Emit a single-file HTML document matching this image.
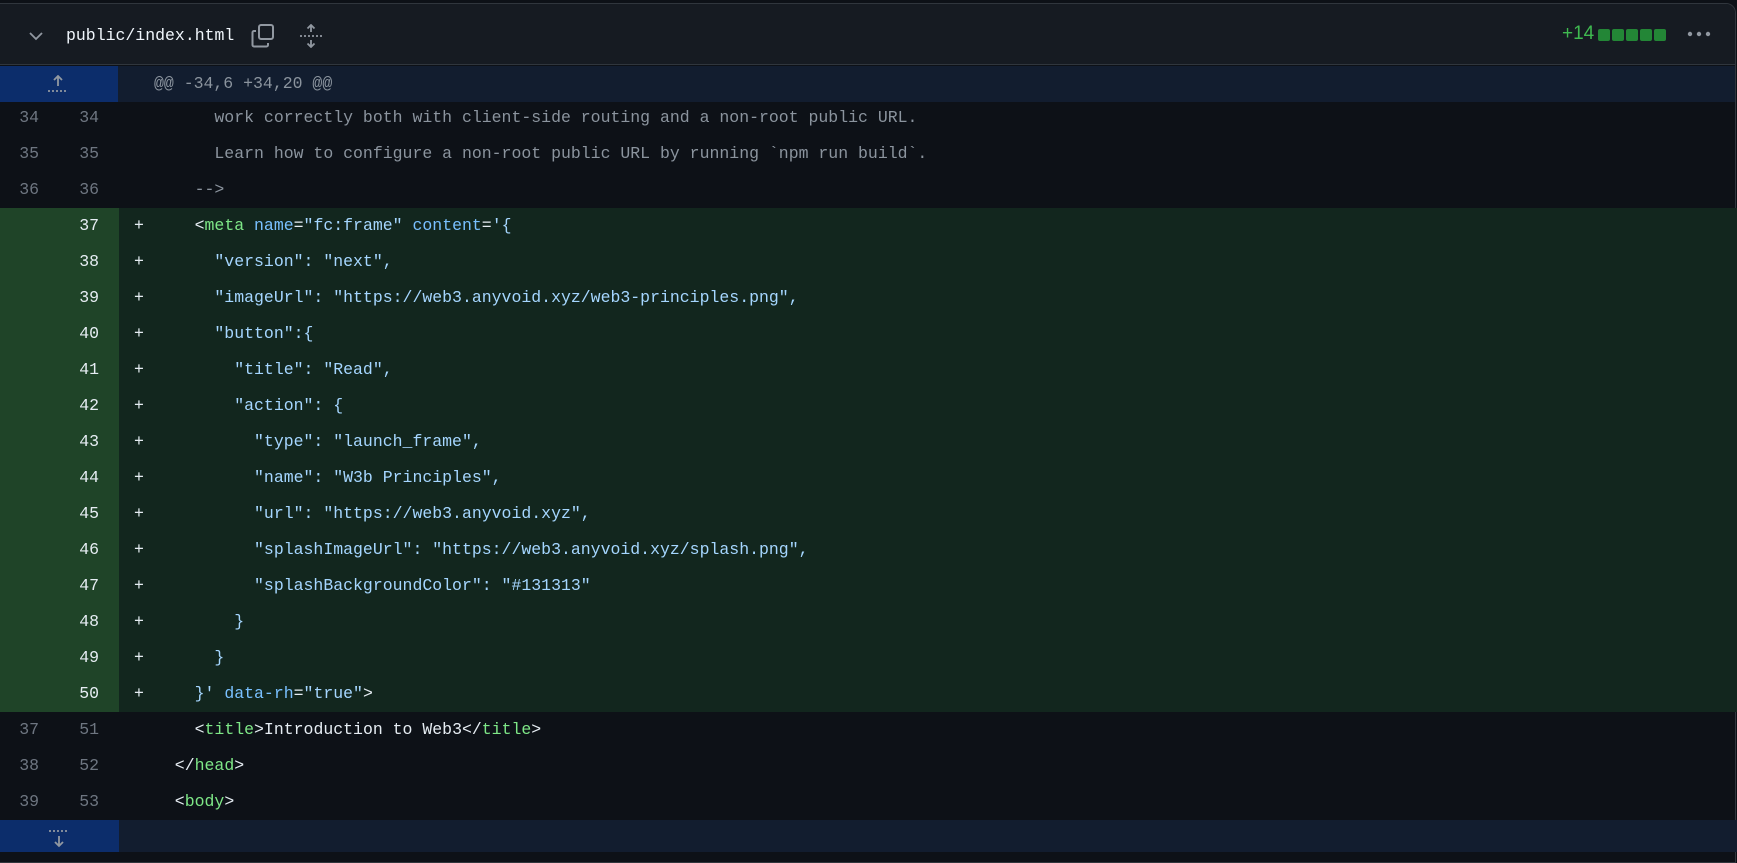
<!DOCTYPE html>
<html><head><meta charset="utf-8"><style>
*{margin:0;padding:0;box-sizing:border-box}
body{width:1737px;height:852px;background:#0d1117;overflow:hidden;font-family:"Liberation Mono",monospace;font-size:16.5px;color:#e6edf3}
.card{position:absolute;left:-2px;top:3px;width:1738px;height:860px;border:1px solid #30363d;border-radius:0 10px 0 0;overflow:hidden}
.hdr{position:absolute;left:0;top:0;width:100%;height:61px;background:#161b22;border-bottom:1px solid #30363d}
.row{position:absolute;left:0;width:100%;height:36px;line-height:36px;white-space:pre}
.g1{position:absolute;left:0;width:39px;text-align:right;color:#6e7681}
.g2{position:absolute;left:58px;width:41px;text-align:right;color:#6e7681}
.gut{position:absolute;left:0;top:0;width:119px;height:36px}
.code{position:absolute;left:155px;top:0}
.pl{position:absolute;left:134px;top:0}
.add{background:#12261e}
.add .gut{background:#1f4428}
.add .g2{color:#e6edf3}
.t{color:#7ee787}.a{color:#79c0ff}.s{color:#a5d6ff}.c{color:#8b949e}
</style></head><body>
<div class="card">
<div class="hdr">
<svg style="position:absolute;left:29px;top:26px" width="16" height="12" viewBox="0 0 16 12"><path d="M2 3l6 6 6-6" stroke="#9198a1" stroke-width="1.8" fill="none"/></svg>
<div style="position:absolute;left:67px;top:20px;line-height:24px;font-size:16.5px;color:#f0f6fc">public/index.html</div>
<svg style="position:absolute;left:252px;top:20px" width="24" height="24" viewBox="0 0 24 24" fill="none" stroke="#9198a1" stroke-width="2"><rect x="8" y="1" width="14" height="14" rx="2"/><path d="M5 7H3a1.5 1.5 0 0 0-1.5 1.5V21A1.5 1.5 0 0 0 3 22.5h12.5A1.5 1.5 0 0 0 17 21v-2"/></svg>
<svg style="position:absolute;left:300px;top:20px" width="24" height="24" viewBox="0 0 24 24" fill="none" stroke="#9198a1" stroke-width="1.8"><path d="M12 1v7M8.5 4.5L12 1l3.5 3.5M12 23v-7M8.5 19.5L12 23l3.5-3.5"/><path d="M1 12h22" stroke-dasharray="2 2"/></svg>
<div style="position:absolute;left:1563px;top:18px;line-height:24px;font-family:'Liberation Sans',sans-serif;font-size:19px;color:#3fb950">+14</div>
<div style="position:absolute;left:1599px;top:25px;display:flex;gap:2px">
<i style="width:12px;height:12px;background:#238636;border-radius:2px"></i><i style="width:12px;height:12px;background:#238636;border-radius:2px"></i><i style="width:12px;height:12px;background:#238636;border-radius:2px"></i><i style="width:12px;height:12px;background:#238636;border-radius:2px"></i><i style="width:12px;height:12px;background:#238636;border-radius:2px"></i>
</div>
<svg style="position:absolute;left:1688px;top:27px" width="24" height="6"><circle cx="3" cy="3" r="2.2" fill="#9198a1"/><circle cx="12" cy="3" r="2.2" fill="#9198a1"/><circle cx="21" cy="3" r="2.2" fill="#9198a1"/></svg>
</div>
<div class="row" style="top:62px;background:#121d2f"><div class="gut" style="background:#0c2d6b"><svg style="position:absolute;left:47px;top:9px" width="24" height="18" viewBox="0 0 24 18" fill="none" stroke="#9198a1" stroke-width="1.8"><path d="M12 1v10M8 5l4-4 4 4"/><path d="M2 16h20" stroke-dasharray="2 2"/></svg></div><div class="code c">@@ -34,6 +34,20 @@</div></div>
</div>
<div style="position:absolute;left:0;top:100px;width:1737px">
<div class="row" style="top:0"><span class="g1">34</span><span class="g2">34</span><span class="code c">      work correctly both with client-side routing and a non-root public URL.</span></div>
<div class="row" style="top:36px"><span class="g1">35</span><span class="g2">35</span><span class="code c">      Learn how to configure a non-root public URL by running `npm run build`.</span></div>
<div class="row" style="top:72px"><span class="g1">36</span><span class="g2">36</span><span class="code c">    --&gt;</span></div>
<div class="row add" style="top:108px"><div class="gut"></div><span class="g2">37</span><span class="pl">+</span><span class="code">    &lt;<span class="t">meta</span> <span class="a">name</span>=<span class="s">"fc:frame"</span> <span class="a">content</span>=<span class="s">'{</span></span></div>
<div class="row add" style="top:144px"><div class="gut"></div><span class="g2">38</span><span class="pl">+</span><span class="code s">      "version": "next",</span></div>
<div class="row add" style="top:180px"><div class="gut"></div><span class="g2">39</span><span class="pl">+</span><span class="code s">      "imageUrl": "https://web3.anyvoid.xyz/web3-principles.png",</span></div>
<div class="row add" style="top:216px"><div class="gut"></div><span class="g2">40</span><span class="pl">+</span><span class="code s">      "button":{</span></div>
<div class="row add" style="top:252px"><div class="gut"></div><span class="g2">41</span><span class="pl">+</span><span class="code s">        "title": "Read",</span></div>
<div class="row add" style="top:288px"><div class="gut"></div><span class="g2">42</span><span class="pl">+</span><span class="code s">        "action": {</span></div>
<div class="row add" style="top:324px"><div class="gut"></div><span class="g2">43</span><span class="pl">+</span><span class="code s">          "type": "launch_frame",</span></div>
<div class="row add" style="top:360px"><div class="gut"></div><span class="g2">44</span><span class="pl">+</span><span class="code s">          "name": "W3b Principles",</span></div>
<div class="row add" style="top:396px"><div class="gut"></div><span class="g2">45</span><span class="pl">+</span><span class="code s">          "url": "https://web3.anyvoid.xyz",</span></div>
<div class="row add" style="top:432px"><div class="gut"></div><span class="g2">46</span><span class="pl">+</span><span class="code s">          "splashImageUrl": "https://web3.anyvoid.xyz/splash.png",</span></div>
<div class="row add" style="top:468px"><div class="gut"></div><span class="g2">47</span><span class="pl">+</span><span class="code s">          "splashBackgroundColor": "#131313"</span></div>
<div class="row add" style="top:504px"><div class="gut"></div><span class="g2">48</span><span class="pl">+</span><span class="code s">        }</span></div>
<div class="row add" style="top:540px"><div class="gut"></div><span class="g2">49</span><span class="pl">+</span><span class="code s">      }</span></div>
<div class="row add" style="top:576px"><div class="gut"></div><span class="g2">50</span><span class="pl">+</span><span class="code">    <span class="s">}'</span> <span class="a">data-rh</span>=<span class="s">"true"</span>&gt;</span></div>
<div class="row" style="top:612px"><span class="g1">37</span><span class="g2">51</span><span class="code">    &lt;<span class="t">title</span>&gt;Introduction to Web3&lt;/<span class="t">title</span>&gt;</span></div>
<div class="row" style="top:648px"><span class="g1">38</span><span class="g2">52</span><span class="code">  &lt;/<span class="t">head</span>&gt;</span></div>
<div class="row" style="top:684px"><span class="g1">39</span><span class="g2">53</span><span class="code">  &lt;<span class="t">body</span>&gt;</span></div>
<div class="row" style="top:720px;height:32px;background:#121d2f"><div class="gut" style="background:#0c2d6b;height:32px"><svg style="position:absolute;left:47px;top:10px" width="24" height="18" viewBox="0 0 24 18" fill="none" stroke="#9198a1" stroke-width="1.8"><path d="M2 1h20" stroke-dasharray="2 2"/><path d="M12 6v10M8 12l4 4 4-4"/></svg></div></div>
</div>
</body></html>
